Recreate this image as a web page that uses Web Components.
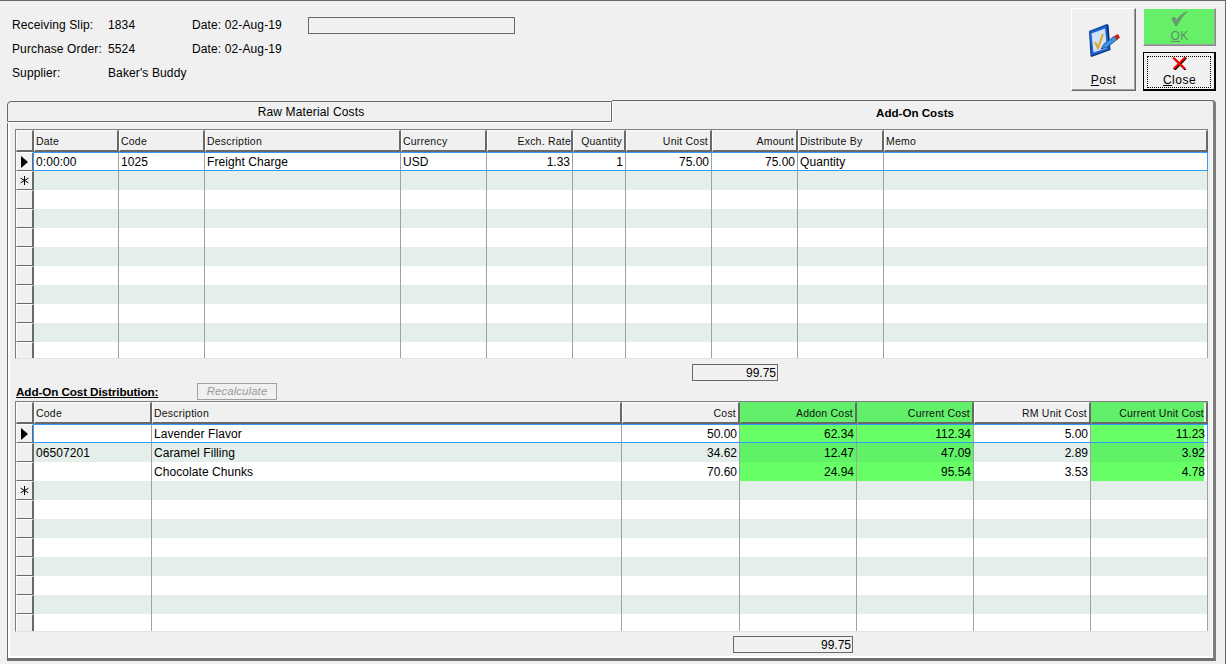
<!DOCTYPE html>
<html>
<head>
<meta charset="utf-8">
<title>Receiving Slip</title>
<style>
  html, body { margin: 0; padding: 0; background: #f0f0f0; }
  body { font: 12px "Liberation Sans", Arial, sans-serif; color: #000; overflow: hidden; }
</style>
</head>
<body>
<slip-window></slip-window>

<script>
const POST_ICON = `<svg width="32" height="33" viewBox="0 0 32 33">
  <path d="M1 7 L19 0 L20.5 1 L22.5 26 L3.5 33 L2.5 32 Z" fill="#0b2f78"/>
  <path d="M1.5 7.5 L18.5 1 L21 25.5 L3.5 31.5 Z" fill="#1b62d2"/>
  <path d="M3.5 9.5 L17 4.5 L19 24 L5.5 28.5 Z" fill="#cfe2fa"/>
  <path d="M7 18 L10 24 L15 10" fill="none" stroke="#e2a41c" stroke-width="2"/>
  <path d="M13 25 L16.5 19.5 L26 12.5 L29 15.5 L19.5 23 Z" fill="#3f92e6" stroke="#123d80" stroke-width=".8"/>
  <path d="M26 12 L30 10 L32 13.5 L29 16 Z" fill="#c4261c"/>
</svg>`;

const OK_ICON = `<svg width="17" height="15" viewBox="0 0 17 15">
  <path d="M.8 7.5 L3.2 6 L5.5 9 C8 5.5 11.5 2.5 16.5 .5 C12.5 4 9 8.5 6 14.5 L4.5 14.5 Z" fill="#6c9c72" stroke="#5a8860" stroke-width=".6"/>
</svg>`;

const CLOSE_ICON = `<svg width="15" height="13" viewBox="0 0 15 13">
  <path d="M1.5 1 L13 12.5 M13.5 .5 L2 12.5" stroke="#000" stroke-width="2" transform="translate(.6 .4)"/>
  <path d="M1 .5 L13 12 M13.5 0 L1.5 12" stroke="#f00" stroke-width="2"/>
</svg>`;

const STAR_ICON = `<svg width="9" height="9" viewBox="0 0 9 9">
  <path d="M4.5 0 V9 M.6 2.2 L8.4 6.8 M.6 6.8 L8.4 2.2" stroke="#000" stroke-width="1"/>
</svg>`;

class HeaderInfo extends HTMLElement {
  constructor() {
    super();
    this.attachShadow({ mode: "open" });
    this.shadowRoot.innerHTML = `
      <style>
        :host { display: grid; grid-template-columns: 96px 84px 116px 207px; grid-auto-rows: 24px; align-items: center; letter-spacing: .12px; }
        .box { height: 15px; border: 1px solid #696969; box-sizing: content-box; width: 205px; }
      </style>
      <span>Receiving Slip:</span><span>1834</span><span>Date: 02-Aug-19</span><div class="box"></div>
      <span>Purchase Order:</span><span>5524</span><span>Date: 02-Aug-19</span><span></span>
      <span>Supplier:</span><span>Baker's Buddy</span>
    `;
  }
}
customElements.define("header-info", HeaderInfo);

class ToolButton extends HTMLElement {
  constructor() {
    super();
    this.attachShadow({ mode: "open" });
    this.shadowRoot.innerHTML = `
      <style>
        :host { display: block; box-sizing: border-box; border: 1px solid; border-color: #fff #696969 #696969 #fff; box-shadow: inset -1px -1px 0 #a0a0a0; letter-spacing: .35px; }
        .in { box-sizing: border-box; height: 100%; display: flex; flex-direction: column; align-items: center; justify-content: space-between; line-height: 14px; }
        :host([kind="ok"]) { background: #66f06a; color: #5f8f66; border-color: #f0f0f0 #8a8a8a #8a8a8a #f0f0f0; }
        :host([kind="ok"]) .in { padding: 2px 0 2px; }
        :host([kind="close"]) { border: 2px solid #000; border-top-width: 1px; border-left-width: 1px; box-shadow: none; padding: 3px 3px 1px; letter-spacing: .5px; }
        :host([kind="close"]) .in { border: 1px dotted #000; padding-left: 1px; }
        :host([kind="post"]) .in { padding: 15px 0 3px; }
      </style>
      <div class="in"><slot></slot></div>
    `;
  }
}
customElements.define("tool-button", ToolButton);

class DataGrid extends HTMLElement {
  constructor() {
    super();
    this.attachShadow({ mode: "open" });
    this.shadowRoot.innerHTML = `
      <style>
        :host { display: block; box-sizing: border-box; width: 1193px; overflow: hidden; background: #fff; border-left: 1px solid #7d7d7d; border-top: 1px solid #7d7d7d; border-bottom: 1px solid #e3e3e3; }
        .line { display: grid; }
        .rh { box-sizing: border-box; background: #f0f0f0; border: 1px solid; border-width: 1px 2px 1px 1px; border-color: #fff #696969 #696969 #fff; display: flex; align-items: center; justify-content: center; width: 18px; }
        .hd .rh { border-bottom-width: 2px; }
        .hd .c { box-sizing: border-box; background: #f0f0f0; border: 1px solid; border-width: 1px 2px 2px 1px; border-color: #fff #696969 #696969 #fff; font-size: 10.5px; letter-spacing: .22px; display: flex; align-items: center; padding: 0 1px; white-space: nowrap; overflow: hidden; color: #111; }
        .hd .c.r { justify-content: flex-end; padding-right: 2px; }
        .hd .c.tight { padding-right: 0; }
        .hd .c.g { background: #62ef6a; border-color: #62ef6a #696969 #696969 #62ef6a; }
        .hd .c.g.short { background: linear-gradient(to right, #62ef6a 112px, #f0f0f0 112px); }
        .row { height: 19px; }
        .row.alt { background: #e3efe8; }
        .row .c { box-sizing: border-box; border-right: 1px solid #a0a0a0; display: flex; align-items: center; padding: 0 2px; white-space: nowrap; overflow: hidden; position: relative; letter-spacing: .07px; }
        .row .c.g { background: #66ff66; }
        .row.alt .c.g { background: #5ff166; }
        .row .c.r { justify-content: flex-end; letter-spacing: 0; }
        .row .c.g.short { background: linear-gradient(to right, #66ff66 113px, #fff 113px); }
        .row.alt .c.g.short { background: linear-gradient(to right, #5ff166 113px, #e3efe8 113px); }
        .row.sel { position: relative; }
        .row.sel::after { content: ""; position: absolute; left: 17px; right: 0; top: 0; bottom: 0; border: 1px solid #3399ff; pointer-events: none; }
        .tri { width: 0; height: 0; border-left: 7px solid #000; border-top: 6px solid transparent; border-bottom: 6px solid transparent; }
      </style>
      <div id="body"></div>
    `;
    this.config = null;
    this.body = this.shadowRoot.querySelector("#body");
  }

  get content() {
    return this.config;
  }

  set content(data) {
    this.config = data;
    this.render();
  }

  render() {
    const { columns, rows, total } = this.config;
    const tpl = "18px " + columns.map((c) => c.w + "px").join(" ");
    this.body.replaceChildren();

    const hd = document.createElement("div");
    hd.className = "line hd";
    hd.style.gridTemplateColumns = tpl;
    hd.style.height = "22px";
    hd.innerHTML = `<div class="rh"></div>` + columns.map((c) => {
      let cls = "c";
      if (c.right) cls += " r";
      if (c.green) cls += " g";
      if (c.short) cls += " short";
      if (c.tight) cls += " tight";
      return `<div class="${cls}">${c.title}</div>`;
    }).join("");
    this.body.appendChild(hd);

    for (let i = 0; i < total; i++) {
      const row = rows[i];
      const el = document.createElement("div");
      // first data row is white, stripes follow
      el.className = "line row" + (i % 2 ? " alt" : "") + (i === 0 ? " sel" : "");
      el.style.gridTemplateColumns = tpl;
      let mark = "";
      if (i === 0) mark = `<span class="tri"></span>`;
      if (i === rows.length) mark = STAR_ICON;
      el.innerHTML = `<div class="rh">${mark}</div>` + columns.map((c, n) => {
        let cls = "c";
        if (c.right) cls += " r";
        if (row && c.green) cls += " g";
        if (row && c.short) cls += " short";
        return `<div class="${cls}">${row ? row[n] : ""}</div>`;
      }).join("");
      this.body.appendChild(el);
    }
  }
}
customElements.define("data-grid", DataGrid);

class TotalBox extends HTMLElement {
  constructor() {
    super();
    this.attachShadow({ mode: "open" });
    this.shadowRoot.innerHTML = `
      <style>
        :host { display: flex; box-sizing: border-box; height: 17px; border: 1px solid #696969; justify-content: flex-end; align-items: center; padding-right: 1px; }
      </style>
      <slot></slot>
    `;
  }
}
customElements.define("total-box", TotalBox);

class TabPanel extends HTMLElement {
  constructor() {
    super();
    this.attachShadow({ mode: "open" });
    this.shadowRoot.innerHTML = `
      <style>
        :host { display: block; margin-left: 7px; width: 1209px; }
        .tabs { display: flex; height: 22px; align-items: flex-end; }
        .tab { box-sizing: border-box; display: flex; align-items: center; justify-content: center; }
        .off { width: 605px; height: 21px; border: 1px solid #696969; border-radius: 4px 0 0 0; box-shadow: inset -1px 0 0 #fff, 1px 0 0 #fff, 0 1px 0 #fff; padding-left: 3px; letter-spacing: .14px; }
        .on { width: 604px; height: 22px; font-weight: bold; border-top: 1px solid #696969; border-right: 3px solid #7d7d7d; border-radius: 0 4px 0 0; font-size: 11.6px; letter-spacing: 0; padding: 1px 0 0 5px; }
        .page { box-sizing: border-box; height: 539px; border-left: 1px solid #696969; border-right: 3px solid #7d7d7d; border-bottom: 3px solid #6e6e6e; padding: 7px 0 0 7px; box-shadow: inset 2px 0 0 #fff, inset 0 -2px 0 #fff, inset -1px 0 0 #fff; }
      </style>
      <div class="tabs">
        <div class="tab off">Raw Material Costs</div>
        <div class="tab on">Add-On Costs</div>
      </div>
      <div class="page"><slot></slot></div>
    `;
  }
}
customElements.define("tab-panel", TabPanel);

class SlipWindow extends HTMLElement {
  constructor() {
    super();
    this.attachShadow({ mode: "open" });
    this.shadowRoot.innerHTML = `
      <style>
        :host { display: block; box-sizing: border-box; width: 1226px; height: 664px; border-top: 1px solid #696969; border-right: 1px solid #696969; }
        .top { display: flex; height: 99px; box-sizing: border-box; padding: 12px 9px 0 12px; justify-content: space-between; align-items: flex-start; }
        .btns { display: grid; grid-template-columns: 65px 73px; grid-template-rows: 38px 39px; column-gap: 7px; row-gap: 6px; margin-top: -5px; }
        .post { grid-row: 1 / 3; }
        .total1 { width: 86px; margin: 5px 0 0 677px; }
        .total2 { width: 120px; margin: 4px 0 0 718px; }
        .dist { display: flex; align-items: center; height: 18px; margin: 1px 0; padding-left: 1px; }
        .dist b { width: 181px; font-size: 11.7px; letter-spacing: -.1px; text-decoration: underline; white-space: nowrap; }
        .recalc { box-sizing: border-box; width: 80px; height: 17px; border: 1px solid #a0a0a0; color: #9a9a9a; font-style: italic; font-size: 11.3px; display: flex; align-items: center; justify-content: center; letter-spacing: .15px; }
        #g1 { height: 230px; }
        #g2 { height: 231px; }
      </style>
      <div class="top">
        <header-info></header-info>
        <div class="btns">
          <tool-button class="post" kind="post">${POST_ICON}<span><u>P</u>ost</span></tool-button>
          <tool-button kind="ok">${OK_ICON}<span><u>O</u>K</span></tool-button>
          <tool-button kind="close">${CLOSE_ICON}<span><u>C</u>lose</span></tool-button>
        </div>
      </div>
      <tab-panel>
        <data-grid id="g1"></data-grid>
        <total-box class="total1">99.75</total-box>
        <div class="dist"><b>Add-On Cost Distribution:</b><div class="recalc">Recalculate</div></div>
        <data-grid id="g2"></data-grid>
        <total-box class="total2">99.75</total-box>
      </tab-panel>
    `;

    this.shadowRoot.querySelector("#g1").content = {
      total: 11,
      columns: [
        { w: 85, title: "Date" },
        { w: 86, title: "Code" },
        { w: 196, title: "Description" },
        { w: 86, title: "Currency" },
        { w: 86, title: "Exch. Rate", right: true, tight: true },
        { w: 53, title: "Quantity", right: true },
        { w: 86, title: "Unit Cost", right: true },
        { w: 86, title: "Amount", right: true },
        { w: 86, title: "Distribute By" },
        { w: 324, title: "Memo" },
      ],
      rows: [["0:00:00", "1025", "Freight Charge", "USD", "1.33", "1", "75.00", "75.00", "Quantity", ""]],
    };

    this.shadowRoot.querySelector("#g2").content = {
      total: 11,
      columns: [
        { w: 118, title: "Code" },
        { w: 470, title: "Description" },
        { w: 118, title: "Cost", right: true },
        { w: 117, title: "Addon Cost", right: true, green: true },
        { w: 117, title: "Current Cost", right: true, green: true },
        { w: 117, title: "RM Unit Cost", right: true },
        { w: 117, title: "Current Unit Cost", right: true, green: true, short: true },
      ],
      rows: [
        ["", "Lavender Flavor", "50.00", "62.34", "112.34", "5.00", "11.23"],
        ["06507201", "Caramel Filling", "34.62", "12.47", "47.09", "2.89", "3.92"],
        ["", "Chocolate Chunks", "70.60", "24.94", "95.54", "3.53", "4.78"],
      ],
    };
  }
}
customElements.define("slip-window", SlipWindow);
</script>
</body>
</html>
